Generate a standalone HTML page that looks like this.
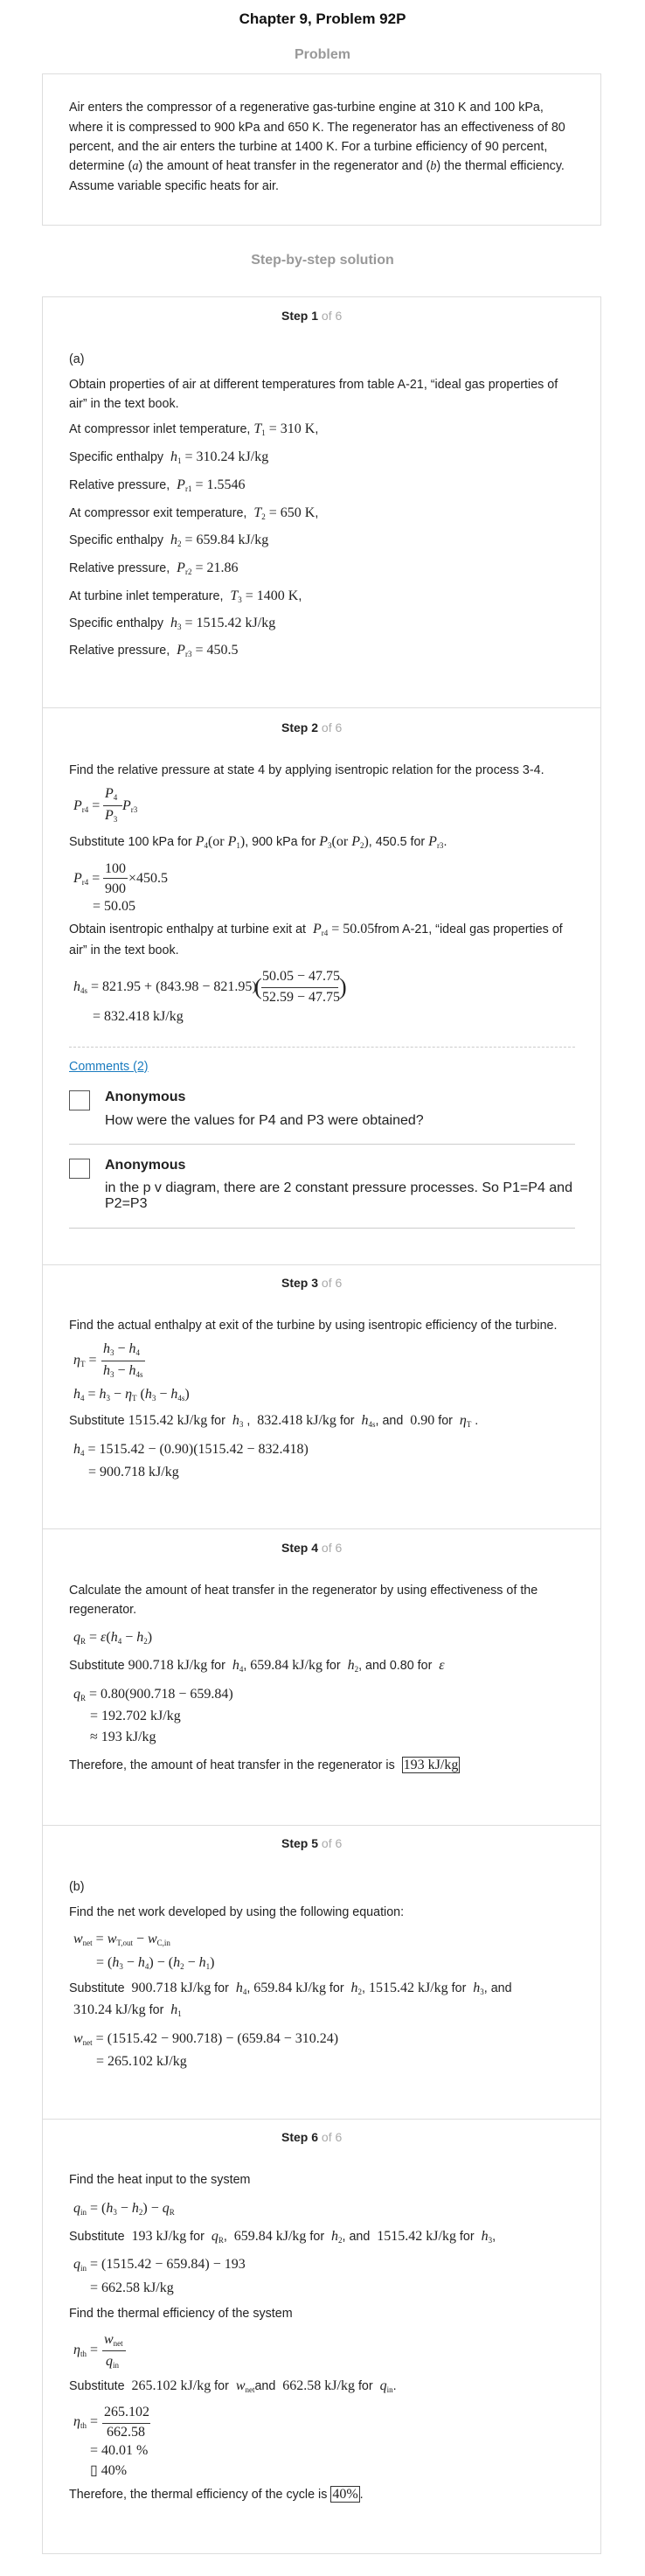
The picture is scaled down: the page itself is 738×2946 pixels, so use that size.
<!DOCTYPE html>
<html><head><meta charset="utf-8"><style>
body{margin:0;background:#fff;width:738px;height:2946px;position:relative;font-family:"Liberation Sans",Arial,sans-serif;color:#222;}
.a{position:absolute;white-space:nowrap;line-height:18px;height:18px;transform:translateY(-9px);font-size:14.3px;}
.l{left:79px}
.m{font-family:"Liberation Serif","Times New Roman",serif;font-size:16px}
i{font-style:italic;font-family:"Liberation Serif",serif}
.s{font-family:"Liberation Serif",serif;font-size:16px}
sub{font-size:9px;vertical-align:-3px;font-family:"Liberation Serif",serif}
.box{position:absolute;left:48px;width:638px;border:1px solid #ddd;}
.hr{position:absolute;left:48px;width:640px;height:1px;background:#ddd}
.st{left:322px;font-weight:bold;font-size:14px}
.st span{font-weight:normal;color:#aaa}
.fl{position:absolute;height:1px;background:#333}
.ib{border:1px solid #333;padding:0 1px}
</style></head><body>
<div class="a" style="left:0;width:738px;text-align:center;top:22px;font-weight:bold;font-size:17px;color:#111">Chapter 9, Problem 92P</div>
<div class="a" style="left:0;width:738px;text-align:center;top:63px;font-weight:bold;font-size:16px;color:#999">Problem</div>
<div class="box" style="top:84px;height:172px"></div>
<div class="a l" style="top:123px">Air enters the compressor of a regenerative gas-turbine engine at 310 K and 100 kPa,</div>
<div class="a l" style="top:146px">where it is compressed to 900 kPa and 650 K. The regenerator has an effectiveness of 80</div>
<div class="a l" style="top:168px">percent, and the air enters the turbine at 1400 K. For a turbine efficiency of 90 percent,</div>
<div class="a l" style="top:190px">determine (<i>a</i>) the amount of heat transfer in the regenerator and (<i>b</i>) the thermal efficiency.</div>
<div class="a l" style="top:213px">Assume variable specific heats for air.</div>
<div class="a" style="left:0;width:738px;text-align:center;top:298px;font-weight:bold;font-size:16px;color:#999">Step-by-step solution</div>
<div class="box" style="top:339px;height:2580px"></div>

<div class="a st" style="top:361px">Step 1 <span>of 6</span></div>
<div class="a l" style="top:411px">(a)</div>
<div class="a l" style="top:440px">Obtain properties of air at different temperatures from table A-21, “ideal gas properties of</div>
<div class="a l" style="top:462px">air” in the text book.</div>
<div class="a l" style="top:491px">At compressor inlet temperature, <span class="s"><i>T</i><sub>1</sub> = 310 K</span>,</div>
<div class="a l" style="top:523px">Specific enthalpy &nbsp;<span class="s"><i>h</i><sub>1</sub> = 310.24 kJ/kg</span></div>
<div class="a l" style="top:555px">Relative pressure, &nbsp;<span class="s"><i>P</i><sub>r1</sub> = 1.5546</span></div>
<div class="a l" style="top:587px">At compressor exit temperature, &nbsp;<span class="s"><i>T</i><sub>2</sub> = 650 K</span>,</div>
<div class="a l" style="top:618px">Specific enthalpy &nbsp;<span class="s"><i>h</i><sub>2</sub> = 659.84 kJ/kg</span></div>
<div class="a l" style="top:650px">Relative pressure, &nbsp;<span class="s"><i>P</i><sub>r2</sub> = 21.86</span></div>
<div class="a l" style="top:682px">At turbine inlet temperature, &nbsp;<span class="s"><i>T</i><sub>3</sub> = 1400 K</span>,</div>
<div class="a l" style="top:713px">Specific enthalpy &nbsp;<span class="s"><i>h</i><sub>3</sub> = 1515.42 kJ/kg</span></div>
<div class="a l" style="top:744px">Relative pressure, &nbsp;<span class="s"><i>P</i><sub>r3</sub> = 450.5</span></div>

<div class="hr" style="top:809px"></div>
<div class="a st" style="top:832px">Step 2 <span>of 6</span></div>
<div class="a l" style="top:881px">Find the relative pressure at state 4 by applying isentropic relation for the process 3-4.</div>
<div class="a m" style="left:84px;top:922px"><i>P</i><sub>r4</sub> =</div>
<div class="a m" style="left:120px;top:908px"><i>P</i><sub>4</sub></div>
<div class="fl" style="left:118px;width:22px;top:921px"></div>
<div class="a m" style="left:120px;top:933px"><i>P</i><sub>3</sub></div>
<div class="a m" style="left:140px;top:922px"><i>P</i><sub>r3</sub></div>
<div class="a l" style="top:963px">Substitute 100 kPa for <span class="s"><i>P</i><sub>4</sub>(or <i>P</i><sub>1</sub>)</span>, 900 kPa for <span class="s"><i>P</i><sub>3</sub>(or <i>P</i><sub>2</sub>)</span>, 450.5 for <span class="s"><i>P</i><sub>r3</sub></span>.</div>
<div class="a m" style="left:84px;top:1005px"><i>P</i><sub>r4</sub> =</div>
<div class="a m" style="left:120px;top:994px">100</div>
<div class="fl" style="left:118px;width:28px;top:1004px"></div>
<div class="a m" style="left:120px;top:1017px">900</div>
<div class="a m" style="left:147px;top:1005px">×450.5</div>
<div class="a m" style="left:106px;top:1037px">= 50.05</div>
<div class="a l" style="top:1063px">Obtain isentropic enthalpy at turbine exit at &nbsp;<span class="s"><i>P</i><sub>r4</sub> = 50.05</span>from A-21, “ideal gas properties of</div>
<div class="a l" style="top:1087px">air” in the text book.</div>
<div class="a m" style="left:84px;top:1129px"><i>h</i><sub>4s</sub> = 821.95 + (843.98 − 821.95)</div>
<div class="a m" style="left:291px;top:1129px;font-size:26px">(</div>
<div class="a m" style="left:300px;top:1117px">50.05 − 47.75</div>
<div class="fl" style="left:299px;width:88px;top:1129px"></div>
<div class="a m" style="left:300px;top:1141px">52.59 − 47.75</div>
<div class="a m" style="left:388px;top:1129px;font-size:26px">)</div>
<div class="a m" style="left:106px;top:1163px">= 832.418 kJ/kg</div>
<div style="position:absolute;left:79px;width:579px;top:1197px;border-top:1px dashed #ccc"></div>
<div class="a l" style="top:1220px;color:#1a7bbf;text-decoration:underline">Comments (2)</div>
<div style="position:absolute;left:79px;top:1247px;width:22px;height:21px;border:1px solid #555"></div>
<div class="a" style="left:120px;top:1255px;font-weight:bold;font-size:16px">Anonymous</div>
<div class="a" style="left:120px;top:1282px;font-size:16px">How were the values for P4 and P3 were obtained?</div>
<div style="position:absolute;left:79px;width:579px;top:1308px;height:1px;background:#ccc"></div>
<div style="position:absolute;left:79px;top:1325px;width:22px;height:21px;border:1px solid #555"></div>
<div class="a" style="left:120px;top:1333px;font-weight:bold;font-size:16px">Anonymous</div>
<div class="a" style="left:120px;top:1359px;font-size:16px">in the p v diagram, there are 2 constant pressure processes. So P1=P4 and</div>
<div class="a" style="left:120px;top:1377px;font-size:16px">P2=P3</div>
<div style="position:absolute;left:79px;width:579px;top:1404px;height:1px;background:#ccc"></div>

<div class="hr" style="top:1446px"></div>
<div class="a st" style="top:1467px">Step 3 <span>of 6</span></div>
<div class="a l" style="top:1516px">Find the actual enthalpy at exit of the turbine by using isentropic efficiency of the turbine.</div>
<div class="a m" style="left:84px;top:1556px"><i>η</i><sub>T</sub> =</div>
<div class="a m" style="left:118px;top:1543px"><i>h</i><sub>3</sub> − <i>h</i><sub>4</sub></div>
<div class="fl" style="left:116px;width:50px;top:1556px"></div>
<div class="a m" style="left:118px;top:1568px"><i>h</i><sub>3</sub> − <i>h</i><sub>4s</sub></div>
<div class="a m" style="left:84px;top:1595px"><i>h</i><sub>4</sub> = <i>h</i><sub>3</sub> − <i>η</i><sub>T</sub> (<i>h</i><sub>3</sub> − <i>h</i><sub>4s</sub>)</div>
<div class="a l" style="top:1625px">Substitute <span class="s">1515.42 kJ/kg</span> for &nbsp;<span class="s"><i>h</i><sub>3</sub></span> , &nbsp;<span class="s">832.418 kJ/kg</span> for &nbsp;<span class="s"><i>h</i><sub>4s</sub></span>, and &nbsp;<span class="s">0.90</span> for &nbsp;<span class="s"><i>η</i><sub>T</sub></span> .</div>
<div class="a m" style="left:84px;top:1658px"><i>h</i><sub>4</sub> = 1515.42 − (0.90)(1515.42 − 832.418)</div>
<div class="a m" style="left:101px;top:1684px">= 900.718 kJ/kg</div>

<div class="hr" style="top:1748px"></div>
<div class="a st" style="top:1770px">Step 4 <span>of 6</span></div>
<div class="a l" style="top:1819px">Calculate the amount of heat transfer in the regenerator by using effectiveness of the</div>
<div class="a l" style="top:1841px">regenerator.</div>
<div class="a m" style="left:84px;top:1873px"><i>q</i><sub>R</sub> = <i>ε</i>(<i>h</i><sub>4</sub> − <i>h</i><sub>2</sub>)</div>
<div class="a l" style="top:1905px">Substitute <span class="s">900.718 kJ/kg</span> for &nbsp;<span class="s"><i>h</i><sub>4</sub></span>, <span class="s">659.84 kJ/kg</span> for &nbsp;<span class="s"><i>h</i><sub>2</sub></span>, and 0.80 for &nbsp;<span class="s"><i>ε</i></span></div>
<div class="a m" style="left:84px;top:1938px"><i>q</i><sub>R</sub> = 0.80(900.718 − 659.84)</div>
<div class="a m" style="left:103px;top:1963px">= 192.702 kJ/kg</div>
<div class="a m" style="left:103px;top:1987px">≈ 193 kJ/kg</div>
<div class="a l" style="top:2019px">Therefore, the amount of heat transfer in the regenerator is &nbsp;<span class="s ib">193 kJ/kg</span></div>

<div class="hr" style="top:2087px"></div>
<div class="a st" style="top:2108px">Step 5 <span>of 6</span></div>
<div class="a l" style="top:2158px">(b)</div>
<div class="a l" style="top:2187px">Find the net work developed by using the following equation:</div>
<div class="a m" style="left:84px;top:2218px"><i>w</i><sub>net</sub> = <i>w</i><sub>T,out</sub> − <i>w</i><sub>C,in</sub></div>
<div class="a m" style="left:110px;top:2245px">= (<i>h</i><sub>3</sub> − <i>h</i><sub>4</sub>) − (<i>h</i><sub>2</sub> − <i>h</i><sub>1</sub>)</div>
<div class="a l" style="top:2274px">Substitute &nbsp;<span class="s">900.718 kJ/kg</span> for &nbsp;<span class="s"><i>h</i><sub>4</sub></span>, <span class="s">659.84 kJ/kg</span> for &nbsp;<span class="s"><i>h</i><sub>2</sub></span>, <span class="s">1515.42 kJ/kg</span> for &nbsp;<span class="s"><i>h</i><sub>3</sub></span>, and</div>
<div class="a" style="left:84px;top:2299px"><span class="s">310.24 kJ/kg</span> for &nbsp;<span class="s"><i>h</i><sub>1</sub></span></div>
<div class="a m" style="left:84px;top:2332px"><i>w</i><sub>net</sub> = (1515.42 − 900.718) − (659.84 − 310.24)</div>
<div class="a m" style="left:110px;top:2358px">= 265.102 kJ/kg</div>

<div class="hr" style="top:2423px"></div>
<div class="a st" style="top:2444px">Step 6 <span>of 6</span></div>
<div class="a l" style="top:2493px">Find the heat input to the system</div>
<div class="a m" style="left:84px;top:2526px"><i>q</i><sub>in</sub> = (<i>h</i><sub>3</sub> − <i>h</i><sub>2</sub>) − <i>q</i><sub>R</sub></div>
<div class="a l" style="top:2558px">Substitute &nbsp;<span class="s">193 kJ/kg</span> for &nbsp;<span class="s"><i>q</i><sub>R</sub></span>, &nbsp;<span class="s">659.84 kJ/kg</span> for &nbsp;<span class="s"><i>h</i><sub>2</sub></span>, and &nbsp;<span class="s">1515.42 kJ/kg</span> for &nbsp;<span class="s"><i>h</i><sub>3</sub></span>,</div>
<div class="a m" style="left:84px;top:2590px"><i>q</i><sub>in</sub> = (1515.42 − 659.84) − 193</div>
<div class="a m" style="left:103px;top:2617px">= 662.58 kJ/kg</div>
<div class="a l" style="top:2646px">Find the thermal efficiency of the system</div>
<div class="a m" style="left:84px;top:2688px"><i>η</i><sub>th</sub> =</div>
<div class="a m" style="left:119px;top:2676px"><i>w</i><sub>net</sub></div>
<div class="fl" style="left:117px;width:27px;top:2688px"></div>
<div class="a m" style="left:121px;top:2701px"><i>q</i><sub>in</sub></div>
<div class="a l" style="top:2729px">Substitute &nbsp;<span class="s">265.102 kJ/kg</span> for &nbsp;<span class="s"><i>w</i><sub>net</sub></span>and &nbsp;<span class="s">662.58 kJ/kg</span> for &nbsp;<span class="s"><i>q</i><sub>in</sub></span>.</div>
<div class="a m" style="left:84px;top:2770px"><i>η</i><sub>th</sub> =</div>
<div class="a m" style="left:119px;top:2759px">265.102</div>
<div class="fl" style="left:117px;width:55px;top:2771px"></div>
<div class="a m" style="left:122px;top:2782px">662.58</div>
<div class="a m" style="left:103px;top:2803px">= 40.01 %</div>
<div class="a m" style="left:103px;top:2826px">▯ 40%</div>
<div class="a l" style="top:2853px">Therefore, the thermal efficiency of the cycle is <span class="s ib">40%</span>.</div>
</body></html>
